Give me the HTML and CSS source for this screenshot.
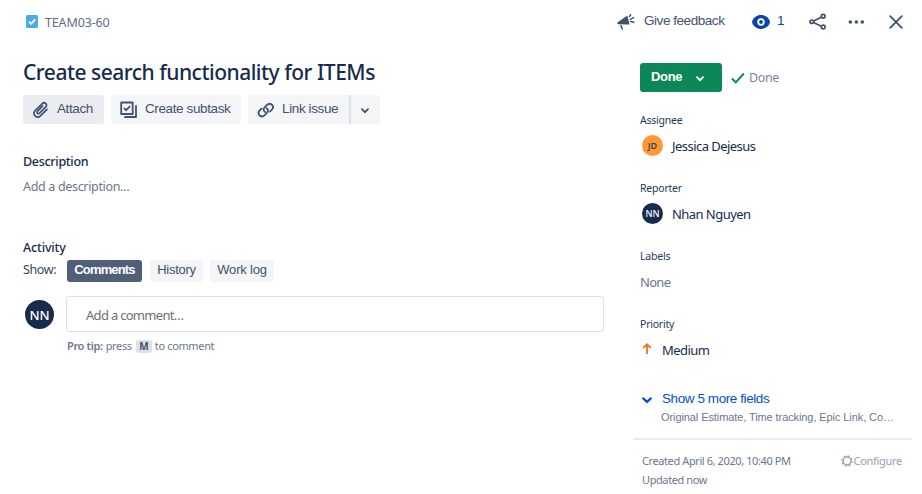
FILE: index.html
```html
<!DOCTYPE html>
<html lang="en">
<head>
<meta charset="utf-8">
<title>TEAM03-60 Create search functionality for ITEMs</title>
<link rel="stylesheet" href="styles.css">
</head>
<body>
<header class="topbar">
  <svg class="task-icon" width="12" height="13" viewBox="0 0 12 13"><rect width="12" height="13" rx="1.5" fill="#4bade8"/><path d="M3 6.6l2.2 2.2L9.2 4.3" fill="none" stroke="#fff" stroke-width="1.8"/></svg>
  <span class="issue-key">TEAM03-60</span>
  <div class="actions">
    <svg class="megaphone" width="18" height="18" viewBox="0 0 18 18"><path d="M.3 10.500Q-.2 9.700.8 9.200L10.300 2.400 12.600 11.400 1 11.300z" fill="#42526e"/><path d="M4 12.500l1.300 3.600M12.500 3.600l1.200-2M13.400 6.300l3.200-1.600M13.700 8.600l3.200.6" fill="none" stroke="#42526e" stroke-width="1.500" stroke-linecap="round"/></svg>
    <span class="feedback">Give feedback</span>
    <svg class="eye" width="18" height="14" viewBox="0 0 18 14"><path d="M9 0C4.800 0 1.600 2.600.4 5.500q-.6 1.500 0 3C1.600 11.400 4.800 14 9 14s7.400-2.600 8.600-5.500q.6-1.500 0-3C16.400 2.600 13.200 0 9 0z" fill="#0747a6"/><circle cx="9" cy="7" r="2.800" fill="none" stroke="#fff" stroke-width="1.800"/></svg>
    <span class="watchers">1</span>
    <svg class="share" width="18" height="18" viewBox="0 0 18 18" fill="none" stroke="#42526e" stroke-width="1.700"><circle cx="2.700" cy="8.700" r="1.700"/><circle cx="14.200" cy="3.300" r="1.900"/><circle cx="14.200" cy="14" r="1.900"/><path d="M4.500 8l7.800-3.800M4.500 9.600l7.800 3.600"/></svg>
    <svg class="more" width="18" height="6" viewBox="0 0 18 6" fill="#42526e"><circle cx="2.300" cy="3" r="1.800"/><circle cx="8.300" cy="3" r="1.800"/><circle cx="14.300" cy="3" r="1.800"/></svg>
    <svg class="close" width="14" height="14" viewBox="0 0 14 14"><path d="M1.200 1.200l11.600 11.600M12.800 1.200L1.200 12.800" stroke="#42526e" stroke-width="1.800" stroke-linecap="round"/></svg>
  </div>
</header>
<div class="content">
  <main class="main">
    <h1 class="title">Create search functionality for ITEMs</h1>
    <div class="toolbar">
      <button class="tool attach"><svg width="18" height="18" viewBox="0 0 18 18"><path d="M10.600 5.200 5.600 10.200c-1.500 1.500.5 3.500 2 2l6-6c2.600-2.600-.9-6-3.500-3.400L3.300 9.300c-3.900 4 1.600 9.200 5.400 5.300l6.300-6.300" fill="none" stroke="#42526e" stroke-width="1.700" stroke-linecap="round"/></svg><span>Attach</span></button>
      <button class="tool subtask"><svg width="18" height="18" viewBox="0 0 18 18"><path d="M1.200 1.500h11.500v11.500H1.200zM5 16h11V5" fill="none" stroke="#42526e" stroke-width="1.800" stroke-linejoin="round" stroke-linecap="round"/><path d="M4 7l2.200 2.200 4-4.200" fill="none" stroke="#42526e" stroke-width="1.800"/></svg><span>Create subtask</span></button>
      <div class="split">
        <button class="tool link"><svg width="18" height="18" viewBox="0 0 18 18"><g fill="none" stroke="#42526e" stroke-width="1.800" stroke-linecap="round"><path d="M8 11C6.200 9.600 6.200 7.900 7.400 6.700L9.900 4c3.300-3.100 8.200.8 5.100 4.500l-1.900 2"/><path d="M9.600 7.200c1.800 1.400 1.800 3.100.6 4.300l-2.500 2.700c-3.300 3.100-8.200-.8-5.100-4.500l1.900-2"/></g></svg><span>Link issue</span></button>
        <button class="tool drop"><svg width="8" height="6" viewBox="0 0 8 6"><path d="M1 1.200l3 3 3-3" fill="none" stroke="#42526e" stroke-width="1.800" stroke-linecap="round"/></svg></button>
      </div>
    </div>
    <h2 class="section-title description">Description</h2>
    <p class="placeholder">Add a description...</p>
    <h2 class="section-title activity">Activity</h2>
    <div class="tabs">
      <span class="show">Show:</span>
      <button class="tab active comments">Comments</button>
      <button class="tab history">History</button>
      <button class="tab worklog">Work log</button>
    </div>
    <div class="composer">
      <span class="avatar large">NN</span>
      <div class="comment-box">Add a comment…</div>
    </div>
    <p class="tip"><b>Pro tip:</b><span class="press">press</span><kbd>M</kbd><span class="to">to comment</span></p>
  </main>
  <aside class="side">
    <div class="status-row">
      <button class="status"><span>Done</span><svg width="8" height="6" viewBox="0 0 8 6"><path d="M1 1.200l3 3 3-3" fill="none" stroke="#fff" stroke-width="1.800" stroke-linecap="round"/></svg></button>
      <svg class="check" width="14" height="12" viewBox="0 0 14 12"><path d="M1 6.500l3.800 3.800L12.800 1.500" fill="none" stroke="#00875a" stroke-width="1.900"/></svg>
      <span class="resolution">Done</span>
    </div>
    <section class="field">
      <h3 class="label">Assignee</h3>
      <div class="value person"><span class="avatar small orange">JD</span><span>Jessica Dejesus</span></div>
    </section>
    <section class="field">
      <h3 class="label">Reporter</h3>
      <div class="value person"><span class="avatar small">NN</span><span>Nhan Nguyen</span></div>
    </section>
    <section class="field">
      <h3 class="label">Labels</h3>
      <div class="value none">None</div>
    </section>
    <section class="field">
      <h3 class="label">Priority</h3>
      <div class="value priority"><svg width="10" height="12" viewBox="0 0 10 12"><path d="M5 11V1.500M1.200 5L5 1.300 8.800 5" fill="none" stroke="#ea7d24" stroke-width="1.900"/></svg><span>Medium</span></div>
    </section>
    <div class="expand"><svg width="10" height="7" viewBox="0 0 10 7"><path d="M1.200 1.400L5 4.900l3.800-3.500" fill="none" stroke="#0052cc" stroke-width="2.200" stroke-linecap="round"/></svg><span>Show 5 more fields</span></div>
    <p class="field-list">Original Estimate, Time tracking, Epic Link, Co…</p>
    <footer class="meta">
      <div class="dates"><span>Created April 6, 2020, 10:40 PM</span><span>Updated now</span></div>
      <div class="configure"><svg width="12" height="12" viewBox="0 0 12 12"><circle cx="6" cy="6" r="3.900" fill="none" stroke="#a0a8b6" stroke-width="1.500"/><circle cx="6" cy="6" r="5" fill="none" stroke="#a0a8b6" stroke-width="1.600" stroke-dasharray="1.960 1.960"/></svg><span>Configure</span></div>
    </footer>
  </aside>
</div>
</body>
</html>
```
FILE: styles.css
```css
* { box-sizing: border-box; }
body { margin: 0; width: 922px; height: 494px; overflow: hidden; background: #fff; color: #172b4d; font: 13px/20px "Noto Sans", "Open Sans", sans-serif; white-space: nowrap; }
h1, h2, h3, p { margin: 0; }
svg { display: block; flex: none; }
button { display: flex; align-items: center; border: 0; border-radius: 3px; padding: 0; white-space: nowrap; }
button, .feedback, .watchers, .expand, .field-list { font-family: "Liberation Sans", Arial, sans-serif; }

.topbar { display: flex; align-items: center; height: 44px; padding: 0 20px 0 26px; }
.task-icon { margin-top: -1px; }
.issue-key { margin: 2px 0 0 7px; color: #5e6c84; font-size: 12.5px; letter-spacing: -0.15px; }
.actions { display: flex; align-items: center; flex: none; width: 286px; margin-left: auto; margin-right: -1px; }
.megaphone { margin-top: -1px; }
.feedback { width: 81px; margin: -3px 27px 0 9px; color: #42526e; font-size: 13.5px; letter-spacing: -0.45px; }
.watchers { width: 7px; margin: -2px 25px 0 7px; color: #0747a6; font-size: 13.5px; }
.more { margin-left: 21px; }
.close { margin-left: 23px; }

.content { display: flex; }
.main { width: 581px; margin-left: 23px; flex: none; }
.title { height: 30px; margin-top: 13px; font-size: 21px; font-weight: 500; line-height: 30px; letter-spacing: -0.49px; }
.toolbar { display: flex; gap: 7px; height: 29px; margin-top: 8px; }
.tool { height: 29px; padding-left: 9px; background: #f4f5f7; color: #42526e; font-size: 13.5px; letter-spacing: -0.38px; }
.tool span { margin: -2px 0 0 7px; }
.attach { width: 81px; background: #ebecf0; }
.subtask { width: 130px; }
.split { display: flex; gap: 2px; background: #dfe1e6; border-radius: 3px; }
.link { width: 101px; border-radius: 3px 0 0 3px; }
.drop { width: 29px; padding: 2px 0 0 10px; border-radius: 0 3px 3px 0; }

.section-title { height: 20px; font-size: 12.5px; font-weight: 500; line-height: 20px; letter-spacing: -0.3px; }
.description { margin-top: 28px; }
.placeholder { margin-top: 5px; color: #6b778c; font-size: 12.5px; letter-spacing: -0.33px; }
.activity { margin-top: 41px; letter-spacing: -0.15px; }
.tabs { display: flex; align-items: center; height: 22px; margin-top: 2px; }
.show { width: 44px; margin-top: -3px; font-size: 12.5px; letter-spacing: -0.4px; color: #344563; }
.tab { height: 22px; justify-content: center; padding-bottom: 3px; background: #f4f5f7; color: #42526e; font-size: 13px; letter-spacing: -0.2px; }
.active { background: #505f79; color: #fff; font-weight: 700; }
.comments { width: 75px; letter-spacing: -0.85px; }
.history { width: 53px; margin-left: 8px; letter-spacing: -0.25px; }
.worklog { width: 64px; margin-left: 7px; }
.composer { display: flex; align-items: center; height: 36px; margin-top: 14px; }
.avatar { display: flex; flex: none; align-items: center; justify-content: center; border-radius: 50%; background: #172b4d; color: #fff; font-weight: 500; letter-spacing: 0; }
.large { width: 29px; height: 29px; margin: 1px 12px 0 2px; font-size: 13px; }
.small { width: 21px; height: 21px; margin: -1px 9px 0 2px; font-size: 9px; }
.orange { background: #ff9a33; color: #344563; font-weight: 600; }
.comment-box { width: 538px; height: 36px; padding: 1px 0 0 19px; border: 1px solid #dfe1e6; border-radius: 3px; color: #707070; font-size: 13px; line-height: 34px; letter-spacing: -0.7px; }
.tip { display: flex; align-items: center; height: 20px; margin: 4px 0 0 44px; color: #6b778c; font-size: 11px; letter-spacing: -0.35px; }
.tip b { font-weight: 600; }
.press { margin-left: 3px; }
.tip kbd { width: 16px; height: 13px; margin: 0 3px 0 4px; border-radius: 3px; background: #dfe1e6; color: #42526e; font: 700 10px/13px "Noto Sans", sans-serif; text-align: center; }

.side { width: 279px; margin-left: 29px; padding-left: 7px; }
.status-row { display: flex; align-items: center; height: 29px; margin-top: 19px; }
.status { width: 82px; height: 29px; padding-left: 11px; background: #0c875a; color: #fff; font-size: 13px; font-weight: 700; letter-spacing: -0.3px; }
.status span { width: 45px; margin-top: -2px; text-align: left; }
.status svg { margin-top: 2px; }
.check { margin: 1px 4px 0 9px; }
.resolution { color: #7a869a; font-size: 12.5px; letter-spacing: -0.4px; }
.field { height: 68px; }
.status-row + .field { margin-top: 18px; }
.label { height: 20px; font-size: 10.5px; font-weight: 400; line-height: 20px; letter-spacing: -0.22px; color: #253858; }
.value { display: flex; align-items: center; height: 20px; margin-top: 6px; font-size: 13px; letter-spacing: -0.55px; }
.none { color: #6b778c; letter-spacing: -0.7px; }
.priority { letter-spacing: -0.55px; }
.priority svg { margin: -3px 10px 0 2px; }
.expand { display: flex; align-items: center; height: 20px; margin-top: 7px; padding-left: 2px; color: #0052cc; font-size: 13.5px; letter-spacing: -0.42px; }
.expand svg { margin: 3px 10px 0 0; }
.field-list { height: 18px; margin-top: -1px; padding-left: 21px; color: #6b778c; font-size: 11px; line-height: 18px; letter-spacing: -0.09px; }
.meta { display: flex; justify-content: space-between; margin: 12px 0 0 -7px; padding: 11px 10px 0 9px; border-top: 2px solid #ebecf0; color: #6b778c; font-size: 11px; line-height: 19px; letter-spacing: -0.4px; }
.dates { display: flex; flex-direction: column; }
.configure { display: flex; align-items: center; gap: 1px; height: 19px; color: #97a0af; letter-spacing: -0.3px; }
```
